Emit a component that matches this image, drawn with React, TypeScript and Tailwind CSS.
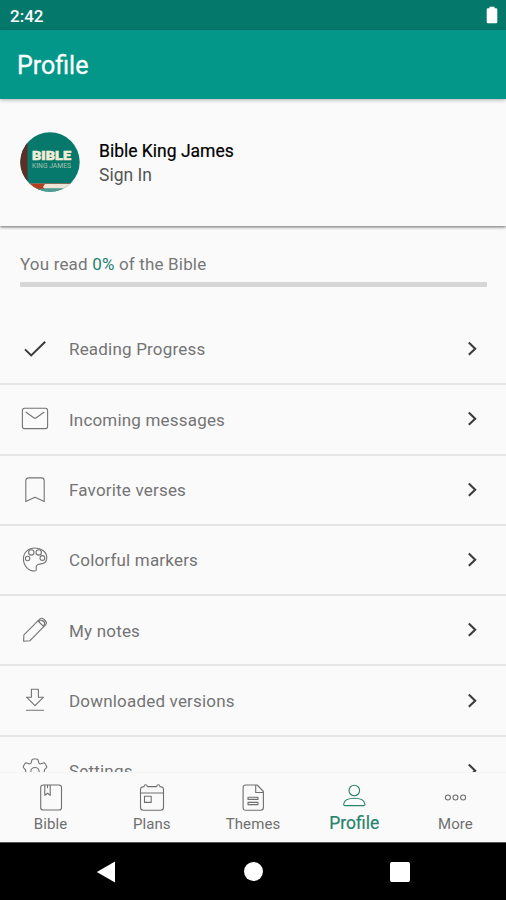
import React from "react";

type IconProps = { className?: string };

const stroke = {
  fill: "none",
  stroke: "currentColor",
  strokeWidth: 1.1,
  strokeLinecap: "round" as const,
  strokeLinejoin: "round" as const,
};

function CheckIcon() {
  return (
    <svg width="28" height="28" viewBox="0 0 28 28" {...stroke} strokeWidth={2} strokeLinecap="butt" strokeLinejoin="miter" className="text-[#3a3a3a]">
      <path d="M4 14.4l6.2 6L24.2 6.8" />
    </svg>
  );
}

function MailIcon() {
  return (
    <svg width="28" height="28" viewBox="0 0 28 28" {...stroke}>
      <rect x="1.4" y="3.2" width="25.2" height="20.4" rx="2.2" />
      <path d="M5 7.3l7.8 5.400q1.200.8 2.400 0L23 7.300" />
    </svg>
  );
}

function BookmarkIcon() {
  return (
    <svg width="28" height="28" viewBox="0 0 28 28" {...stroke}>
      <path d="M4.800 25.600V4.700q0-2.800 2.800-2.800h12.800q2.800 0 2.800 2.800v20.900L14 21.300z" />
    </svg>
  );
}

function PaletteIcon() {
  return (
    <svg width="28" height="28" viewBox="0 0 28 28" {...stroke}>
      <path d="M14 2C7.200 2 2.400 6.800 2.400 12.800c0 7 5.200 12.200 11.200 12.200 1.500 0 1.800-.7 1.600-2.400-.3-3 .9-4.300 3.600-4.500 4.300-.3 7-2 7-6.400C25.800 6.200 20.600 2 14 2z" />
      <circle cx="6.600" cy="12.500" r="2.200" />
      <circle cx="10.300" cy="6.400" r="2.700" />
      <circle cx="17.700" cy="6.400" r="2.700" />
      <circle cx="21.400" cy="12" r="2.400" />
    </svg>
  );
}

function PencilIcon() {
  return (
    <svg width="28" height="28" viewBox="0 0 28 28" {...stroke}>
      <path d="M2.600 25.200l.3-6.300L18.700 3.200q2-1.900 4 0l1.800 1.800q1.900 1.900 0 3.900L8.800 24.800z" />
      <path d="M17 5l5.800 5.700M18 6q.3-2.200 2.700-1.600 2.800.7 3 3.100.1 1.800-1.900 2.200" />
    </svg>
  );
}

function DownloadIcon() {
  return (
    <svg width="28" height="28" viewBox="0 0 28 28" {...stroke}>
      <path d="M10.400 2.200h7v8h5.100L14 18.700l-8.500-8.500h4.900zM5.500 23.300h17" />
    </svg>
  );
}

function GearIcon() {
  return (
    <svg width="28" height="28" viewBox="0 0 28 28" {...stroke}>
      <path d="M10.500 4.800q.2-2.800 2-2.800h3q1.800 0 2 2.800.2 1.700 1.700 2.200l3-1q1.300-.4 2 .8l1.300 2.300q.6 1.200-.4 2l-1.300 1.200q-1 1.900 0 3.800l1.300 1.200q1 .8.400 2l-1.300 2.300q-.7 1.200-2 .8l-3-1q-1.500.5-1.700 2.200-.2 2.400-2 2.400h-3q-1.800 0-2-2.400-.2-1.700-1.700-2.200l-3 1q-1.300.4-2-.8l-1.300-2.300q-.6-1.200.4-2l1.300-1.200q1-1.900 0-3.800l-1.300-1.200q-1-.8-.4-2l1.300-2.300q.7-1.200 2-.8l3 1q1.500-.5 1.700-2.200z" />
      <circle cx="14" cy="14.700" r="4.200" />
    </svg>
  );
}

function ChevronIcon() {
  return (
    <svg width="12" height="16" viewBox="0 0 12 16" {...stroke} strokeWidth={2.100} strokeLinecap="butt" strokeLinejoin="miter" className="text-[#3c3c3c]">
      <path d="M2.800 1.600l6.400 6.100-6.400 6.100" />
    </svg>
  );
}

function BookIcon() {
  return (
    <svg width="26" height="28" viewBox="0 0 26 28" {...stroke}>
      <rect x="2.700" y="1" width="20.800" height="25" rx="2.600" />
      <path d="M6.800 1.300v10l2.700-2 2.700 2v-10M9.500 1.300v2.500" />
    </svg>
  );
}

function CalendarIcon() {
  return (
    <svg width="26" height="28" viewBox="0 0 26 28" {...stroke}>
      <path d="M1.500 9V5.200q0-2 2-2.300L5 2.600Q5.300.7 6.700.7t1.700 1.900h9.200Q17.900.7 19.300.7T21 2.600l1.500.3q2 .3 2 2.300v18q0 3-3 3h-17q-3 0-3-3V9zh23" />
      <rect x="5.500" y="12.200" width="6.700" height="6.200" />
    </svg>
  );
}

function DocumentIcon() {
  return (
    <svg width="26" height="28" viewBox="0 0 26 28" {...stroke}>
      <path d="M5.800 1h11.400l6.200 6.500v16q0 2.700-2.700 2.700H5.800q-2.700 0-2.700-2.700V3.700Q3.100 1 5.800 1zM15.700 1.200v7.300h7.500" />
      <path d="M8 13.200h10v2.200H8zM8 18.400h10v2.200H8z" />
    </svg>
  );
}

function PersonIcon() {
  return (
    <svg width="26" height="28" viewBox="0 0 26 28" {...stroke}>
      <circle cx="13.300" cy="6.500" r="5.300" />
      <path d="M4.100 21.600q-1.600 0-1.400-1.600c.6-4.200 4.500-5.700 10.600-5.700s10 1.500 10.600 5.700q.2 1.600-1.400 1.600z" />
    </svg>
  );
}

function MoreIcon() {
  return (
    <svg width="26" height="28" viewBox="0 0 26 28" {...stroke}>
      <circle cx="5.900" cy="13.500" r="2.500" />
      <circle cx="13.500" cy="13.500" r="2.500" />
      <circle cx="21.100" cy="13.500" r="2.500" />
    </svg>
  );
}

function Avatar({ className }: IconProps) {
  return (
    <svg width="60" height="60" viewBox="0 0 60 60" className={className}>
      <defs>
        <clipPath id="avatar-clip">
          <circle cx="30" cy="30" r="29.700" />
        </clipPath>
      </defs>
      <g clipPath="url(#avatar-clip)">
        <rect width="60" height="60" fill="#07796c" />
        <rect width="7.500" height="60" fill="#5b3025" />
        <rect y="51.500" width="60" height="5" fill="#eee5d8" />
        <rect y="51" width="60" height="1" fill="#7b6f5f" />
        <path d="M10 52h15l-2 3 2 3H10z" fill="#b43e1d" />
        <rect y="56.800" width="60" height="4" fill="#4e9b94" />
        <text x="12" y="27.600" textLength="39" lengthAdjust="spacingAndGlyphs" fontSize="12" fontWeight="900" fill="#f1ecd6" stroke="#f1ecd6" strokeWidth="0.500" className="font-[Roboto,sans-serif]">
          BIBLE
        </text>
        <text x="12" y="35.600" textLength="39" lengthAdjust="spacingAndGlyphs" fontSize="7" fill="#a9c4ae" className="font-[Roboto,sans-serif]">
          KING JAMES
        </text>
      </g>
    </svg>
  );
}

const menu = [
  { label: "Reading Progress", Icon: CheckIcon },
  { label: "Incoming messages", Icon: MailIcon },
  { label: "Favorite verses", Icon: BookmarkIcon },
  { label: "Colorful markers", Icon: PaletteIcon },
  { label: "My notes", Icon: PencilIcon },
  { label: "Downloaded versions", Icon: DownloadIcon },
  { label: "Settings", Icon: GearIcon },
];

const tabs = [
  { label: "Bible", Icon: BookIcon },
  { label: "Plans", Icon: CalendarIcon },
  { label: "Themes", Icon: DocumentIcon },
  { label: "Profile", Icon: PersonIcon },
  { label: "More", Icon: MoreIcon },
];

export default function App() {
  const active = "Profile";

  return (
    <div className="flex h-[900px] w-[506px] flex-col overflow-hidden bg-[#fafafa] font-[Roboto,sans-serif]">
      {/* Status bar */}
      <div className="flex h-[30px] shrink-0 items-center justify-between bg-[#04796b] pr-2 pl-[10px] text-white">
        <span className="pt-[3px] text-[17px] font-medium">2:42</span>
        <svg width="12" height="18" viewBox="0 0 12 18" fill="currentColor">
          <path d="M3.500 2.200V.7h5v1.500H10q1.300 0 1.300 1.300V16q0 1.300-1.300 1.300H2Q.7 17.300.7 16V3.500q0-1.300 1.300-1.300z" />
        </svg>
      </div>

      <header className="relative z-10 flex h-[69px] shrink-0 items-center bg-[#029788] pt-[2px] pl-[17px] shadow-[0_1px_4px_rgba(0,0,0,0.3)]">
        <h1 className="text-[25px] text-white [-webkit-text-stroke:0.300px_white]">Profile</h1>
      </header>

      {/* Account */}
      <section className="flex h-[127px] shrink-0 items-center gap-[19px] pb-[1px] pl-5 shadow-[0_1px_3px_rgba(0,0,0,0.6)]">
        <Avatar />
        <div className="pt-[1px] text-[17.500px] leading-6">
          <div className="text-black [-webkit-text-stroke:0.200px_black]">Bible King James</div>
          <div className="text-[#555]">Sign In</div>
        </div>
      </section>

      {/* Reading progress */}
      <section className="h-[89px] shrink-0 pt-[26px] pr-[19px] pl-5">
        <p className="text-[17px] leading-6 tracking-[0.170px] text-[#777]">
          You read <span className="text-[#27836b]">0%</span> of the Bible
        </p>
        <div className="mt-[6px] h-[5px] rounded-[1px] bg-[#d6d6d6]" />
      </section>

      <main className="min-h-0 flex-1 overflow-hidden text-[#747474]">
        {menu.map(({ label, Icon }) => (
          <div key={label} className="flex h-[70.300px] items-center border-b-2 border-[#e5e5e5] pr-7 pl-[21px]">
            <Icon />
            <span className="ml-5 flex-1 pt-[2px] text-[17px] tracking-[0.190px]">{label}</span>
            <ChevronIcon />
          </div>
        ))}
      </main>

      <nav className="flex h-[70px] shrink-0 border-t border-[#f4f4f4] bg-[#fafafa]">
        {tabs.map(({ label, Icon }) => (
          <div
            key={label}
            className={
              label === active
                ? "flex flex-1 flex-col items-center pt-[11px] text-[#27836b]"
                : "flex flex-1 flex-col items-center pt-[11px] text-[#6f6f6f]"
            }
          >
            <Icon />
            <span className={label === active ? "-mt-[1px] text-[17.500px] leading-6 [-webkit-text-stroke:0.200px_#27836b]" : "text-[15px] leading-6 tracking-[0.100px]"}>{label}</span>
          </div>
        ))}
      </nav>

      {/* System navigation */}
      <div className="flex h-[58px] shrink-0 items-center justify-between border-t border-[#555] bg-black px-[96px] text-white">
        <svg width="20" height="22" viewBox="0 0 20 22" fill="currentColor">
          <path d="M.8 11L19 .5v21z" />
        </svg>
        <div className="size-[19px] rounded-full bg-white" />
        <div className="size-5 rounded-[2px] bg-white" />
      </div>
    </div>
  );
}
